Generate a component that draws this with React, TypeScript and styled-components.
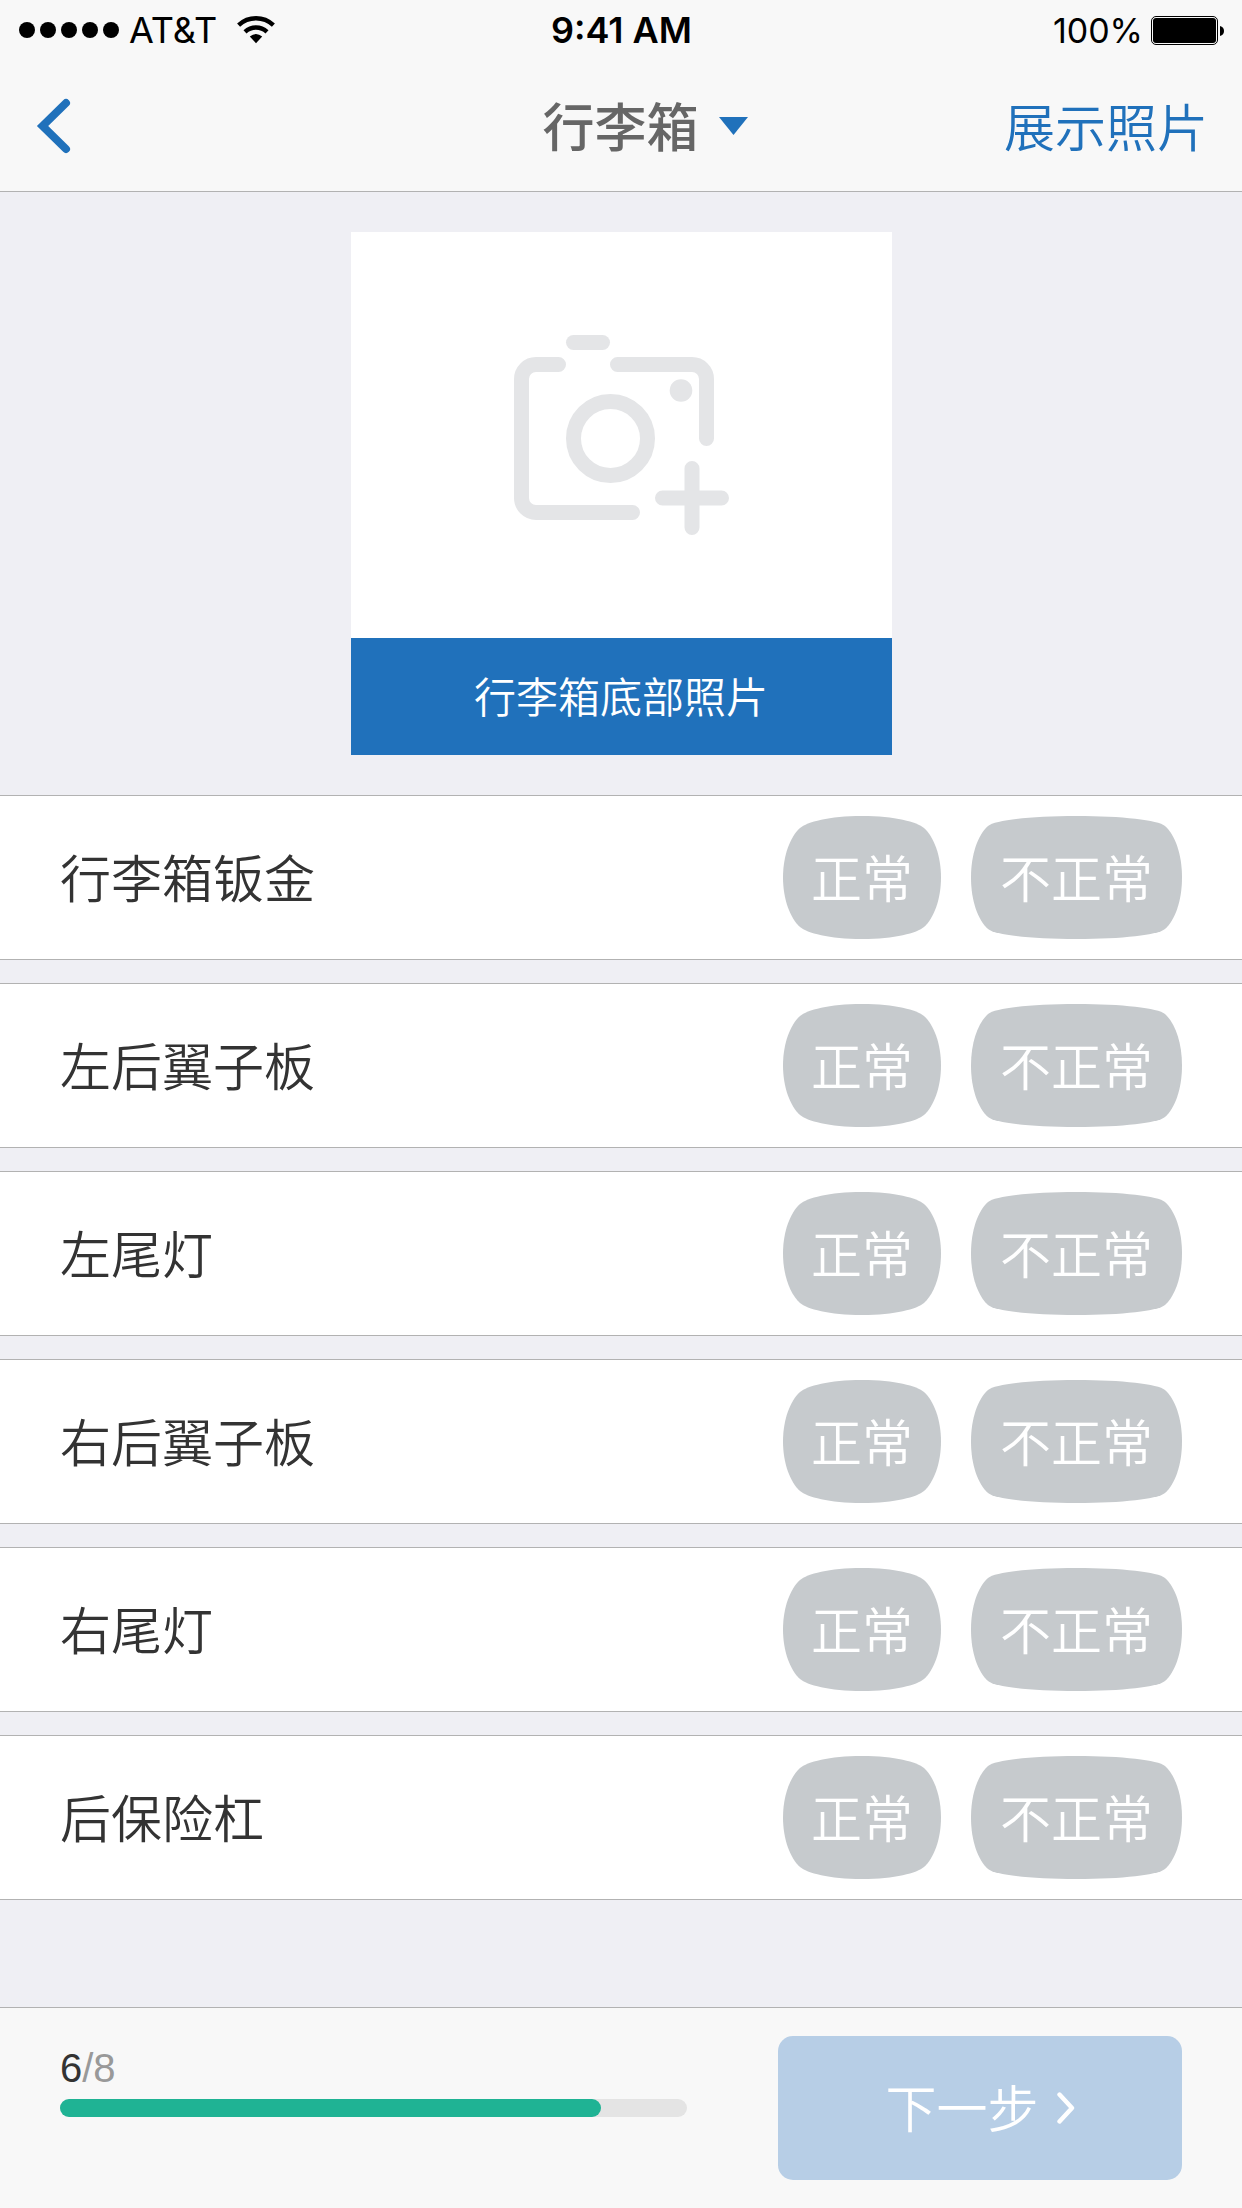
import React, { useState } from "react";
import styled, { createGlobalStyle } from "styled-components";

const GlobalStyle = createGlobalStyle`
  *, *::before, *::after { box-sizing: border-box; }
  body {
    margin: 0;
    background: #efeff4;
    color: #333;
    font-family: "Liberation Sans", "Noto Sans CJK SC", sans-serif;
  }
  button, select, input { font-family: inherit; }
`;

const CJK = `"Noto Sans CJK SC", sans-serif`;

const Page = styled.div`
  display: flex;
  flex-direction: column;
  min-height: 100vh;
`;

const TopBar = styled.header`
  background: #f8f8f8;
  border-bottom: 1px solid #b2b2b2;
`;

const StatusBar = styled.div`
  display: grid;
  grid-template-columns: 1fr auto 1fr;
  align-items: center;
  height: 61px;
  padding: 0 18px 0 19px;
  color: #000;
  font-family: Inter, sans-serif;
  font-size: 36px;
  line-height: 61px;
`;

const StatusGroup = styled.div<{ $end?: boolean }>`
  display: flex;
  align-items: center;
  justify-content: ${(p) => (p.$end ? "flex-end" : "flex-start")};
  gap: ${(p) => (p.$end ? 8 : 10)}px;
`;

const Carrier = styled.span`
  margin-right: 10px;
`;

const Clock = styled.span`
  font-weight: 600;
`;

const BatteryLevel = styled.span`
  font-size: 34px;
`;

const NavBar = styled.nav`
  display: grid;
  grid-template-columns: 1fr auto 1fr;
  align-items: center;
  height: 130px;
  padding: 0 34px;
`;

const PlainButton = styled.button`
  display: flex;
  align-items: center;
  padding: 0;
  border: 0;
  background: none;
  cursor: pointer;
`;

const BackButton = styled(PlainButton)`
  justify-self: start;
`;

const PhotosButton = styled(PlainButton)`
  justify-self: end;
  padding-bottom: 2px;
  color: #2071bb;
  font-family: ${CJK};
  font-size: 51px;
  font-weight: 350;
  line-height: 72px;
`;

const SectionPicker = styled.label`
  display: grid;
  align-items: center;

  & > * {
    grid-area: 1 / 1;
  }

  & > svg {
    justify-self: end;
    pointer-events: none;
  }
`;

const SectionSelect = styled.select`
  appearance: none;
  padding: 0 48px 2px;
  border: 0;
  background: none;
  color: #666;
  font-family: ${CJK};
  font-size: 52px;
  font-weight: 500;
  line-height: 72px;
  cursor: pointer;
`;

const Main = styled.main`
  flex: 1;
`;

const PhotoArea = styled.section`
  display: flex;
  justify-content: center;
  padding: 40px 0;
`;

const PhotoButton = styled.button`
  display: flex;
  flex-direction: column;
  width: 541px;
  max-width: 100%;
  padding: 0;
  border: 0;
  background: #fff;
  cursor: pointer;
`;

const PhotoPlaceholder = styled.span`
  display: flex;
  align-items: center;
  justify-content: center;
  width: 100%;
  height: 406px;
`;

const PhotoCaption = styled.span`
  width: 100%;
  padding-bottom: 4px;
  background: #2071bb;
  color: #fff;
  font-family: ${CJK};
  font-size: 42px;
  font-weight: 350;
  line-height: 113px;
  text-align: center;
`;

const CheckList = styled.ul`
  display: flex;
  flex-direction: column;
  gap: 23px;
  margin: 0;
  padding: 0;
  list-style: none;
`;

const CheckRow = styled.li`
  display: flex;
  align-items: center;
  justify-content: space-between;
  height: 165px;
  padding: 0 60px;
  border: solid #b2b2b2;
  border-width: 1px 0;
  background: #fff;
  font-family: ${CJK};
  font-size: 51px;
  font-weight: 350;
  line-height: 72px;
`;

const RowLabel = styled.span`
  padding-bottom: 4px;
`;

const Choices = styled.div`
  display: flex;
  gap: 30px;
`;

const Choice = styled.label<{ $width: number }>`
  position: relative;
  display: grid;
  align-items: center;
  justify-items: center;
  width: ${(p) => p.$width}px;
  height: 123px;
  color: #fff;
  cursor: pointer;

  & > * {
    grid-area: 1 / 1;
  }

  & > svg {
    fill: #c6cacd;
  }

  & > input:checked + svg {
    fill: #2071bb;
  }
`;

const ChoiceInput = styled.input`
  position: absolute;
  inset: 0;
  width: 100%;
  height: 100%;
  margin: 0;
  opacity: 0;
  cursor: pointer;
`;

const ChoiceText = styled.span`
  padding-bottom: 4px;
  pointer-events: none;
`;

const BottomBar = styled.footer`
  display: flex;
  align-items: flex-start;
  justify-content: space-between;
  gap: 60px;
  padding: 28px 60px;
  border-top: 1px solid #b2b2b2;
  background: #f8f8f8;
`;

const Progress = styled.div`
  display: flex;
  flex: 1;
  flex-direction: column;
  gap: 9px;
  max-width: 627px;
  padding-top: 10px;
`;

const ProgressLabel = styled.label`
  color: #999;
  font-size: 40px;
  line-height: 44px;
`;

const Done = styled.span`
  color: #333;
`;

const ProgressBar = styled.progress`
  appearance: none;
  display: block;
  width: 100%;
  height: 18px;
  border: 0;

  &::-webkit-progress-bar {
    border-radius: 9px;
    background: #e4e4e4;
  }

  &::-webkit-progress-value {
    border-radius: 9px;
    background: #1fb394;
  }
`;

const NextButton = styled.button`
  display: flex;
  align-items: center;
  justify-content: center;
  gap: 18px;
  width: 404px;
  height: 144px;
  padding: 0;
  border: 0;
  border-radius: 15px;
  background: #b7cee6;
  color: #fff;
  font-family: ${CJK};
  font-size: 51px;
  font-weight: 350;
  line-height: 72px;
  cursor: pointer;
`;

const NextText = styled.span`
  padding-bottom: 4px;
`;

const SignalDots = () => (
  <svg width="100" height="17" aria-hidden="true">
    {[0, 1, 2, 3, 4].map((i) => (
      <circle key={i} cx={8 + i * 21} cy="8" r="8" />
    ))}
  </svg>
);

const WifiIcon = () => (
  <svg width="38" height="29" viewBox="0 0 38 29" aria-hidden="true">
    <g fill="none" stroke="#000" strokeWidth="4.4">
      <path d="M1.6 9.2C11.5 0 26.5 0 36.4 9.2" />
      <path d="M8 15.8C14.3 10 23.7 10 30 15.8" />
    </g>
    <path d="M19 27.2L12.8 20.6Q19 15.6 25.2 20.6Z" />
  </svg>
);

const BatteryIcon = () => (
  <svg width="73" height="29" viewBox="0 0 73 29" aria-hidden="true">
    <rect x="0.5" y="0.5" width="66" height="28" rx="4.5" fill="none" stroke="#000" />
    <rect x="2" y="2" width="63" height="25" rx="3" />
    <path d="M69 10Q73 11 73 15Q73 19 69 20Z" />
  </svg>
);

const BackIcon = () => (
  <svg width="37" height="56" viewBox="0 0 37 56" aria-hidden="true">
    <path d="M32 5L8.6 28L32 51" fill="none" stroke="#2071bb" strokeWidth="8" strokeLinecap="round" />
  </svg>
);

const CaretIcon = () => (
  <svg width="29" height="18" viewBox="0 0 29 18" aria-hidden="true">
    <path d="M0 0H29L14.5 18Z" fill="#2071bb" />
  </svg>
);

const NextIcon = () => (
  <svg width="18" height="32" viewBox="0 0 18 32" aria-hidden="true">
    <path d="M2.5 2.5L15 16L2.5 29.5" fill="none" stroke="#fff" strokeWidth="4.4" strokeLinecap="round" strokeLinejoin="round" />
  </svg>
);

const CameraIcon = () => (
  <svg width="215" height="200" viewBox="0 0 215 200" aria-hidden="true">
    <g fill="none" stroke="#e4e5e7" strokeWidth="15" strokeLinecap="round">
      <path d="M59.5 7.5H88.5" />
      <path d="M44.5 29.5H22A14.5 14.5 0 0 0 7.5 44V163A14.5 14.5 0 0 0 22 177.5H118.5" />
      <path d="M103.5 29.5H178A14.5 14.5 0 0 1 192.5 44V103.5" />
      <circle cx="96.5" cy="103.5" r="37" />
      <path d="M178 133.5V192.5M148.5 163H207.5" />
    </g>
    <circle cx="167" cy="55.5" r="11.3" fill="#e4e5e7" />
  </svg>
);

type ShapeCurve = {
  side: number;
  corner: [number, number];
  topFar: number;
};

// A bulging rounded rectangle: one quarter outline mirrored to all four corners.
const ChoiceShape = ({ width: w, curve }: { width: number; curve: ShapeCurve }) => {
  const h = 123;
  const m = h / 2;
  const c = w / 2;
  const [cx, cy] = curve.corner;
  const s = curve.side;
  const f = curve.topFar;
  const sx = cx - 10;
  const sy = cy + 9;
  const nx = cx + 7;
  const ny = cy - 6;
  return (
    <svg width={w} height={h} viewBox={`0 0 ${w} ${h}`} aria-hidden="true">
      <path
        d={`M0 ${m}C0 ${s} ${sx} ${sy} ${cx} ${cy}C${nx} ${ny} ${f} 0 ${c} 0
          C${w - f} 0 ${w - nx} ${ny} ${w - cx} ${cy}C${w - sx} ${sy} ${w} ${s} ${w} ${m}
          C${w} ${h - s} ${w - sx} ${h - sy} ${w - cx} ${h - cy}C${w - nx} ${h - ny} ${w - f} ${h} ${c} ${h}
          C${f} ${h} ${nx} ${h - ny} ${cx} ${h - cy}C${sx} ${h - sy} 0 ${h - s} 0 ${m}Z`}
      />
    </svg>
  );
};

const OPTIONS: { label: string; width: number; curve: ShapeCurve }[] = [
  { label: "正常", width: 158, curve: { side: 40, corner: [17, 12], topFar: 46 } },
  { label: "不正常", width: 211, curve: { side: 38, corner: [17, 10], topFar: 60 } },
];

const ITEMS = ["行李箱钣金", "左后翼子板", "左尾灯", "右后翼子板", "右尾灯", "后保险杠"];

export default function App() {
  const [results, setResults] = useState<Record<string, string>>({});

  return (
    <Page lang="zh-CN">
      <GlobalStyle />
      <TopBar>
        <StatusBar>
          <StatusGroup>
            <SignalDots />
            <Carrier>AT&amp;T</Carrier>
            <WifiIcon />
          </StatusGroup>
          <Clock>9:41 AM</Clock>
          <StatusGroup $end>
            <BatteryLevel>100%</BatteryLevel>
            <BatteryIcon />
          </StatusGroup>
        </StatusBar>
        <NavBar>
          <BackButton type="button" aria-label="返回">
            <BackIcon />
          </BackButton>
          <SectionPicker>
            <SectionSelect aria-label="行李箱" defaultValue="行李箱">
              <option>行李箱</option>
            </SectionSelect>
            <CaretIcon />
          </SectionPicker>
          <PhotosButton type="button">展示照片</PhotosButton>
        </NavBar>
      </TopBar>

      <Main>
        <PhotoArea>
          <PhotoButton type="button">
            <PhotoPlaceholder>
              <CameraIcon />
            </PhotoPlaceholder>
            <PhotoCaption>行李箱底部照片</PhotoCaption>
          </PhotoButton>
        </PhotoArea>
        <CheckList>
          {ITEMS.map((item) => (
            <CheckRow key={item}>
              <RowLabel>{item}</RowLabel>
              <Choices role="radiogroup" aria-label={item}>
                {OPTIONS.map(({ label, width, curve }) => (
                  <Choice key={label} $width={width}>
                    <ChoiceInput
                      type="radio"
                      name={item}
                      value={label}
                      checked={results[item] === label}
                      onChange={() => setResults({ ...results, [item]: label })}
                    />
                    <ChoiceShape width={width} curve={curve} />
                    <ChoiceText>{label}</ChoiceText>
                  </Choice>
                ))}
              </Choices>
            </CheckRow>
          ))}
        </CheckList>
      </Main>

      <BottomBar>
        <Progress>
          <ProgressLabel htmlFor="progress">
            <Done>6</Done>/8
          </ProgressLabel>
          <ProgressBar id="progress" value={0.863} max={1} />
        </Progress>
        <NextButton type="button">
          <NextText>下一步</NextText>
          <NextIcon />
        </NextButton>
      </BottomBar>
    </Page>
  );
}
